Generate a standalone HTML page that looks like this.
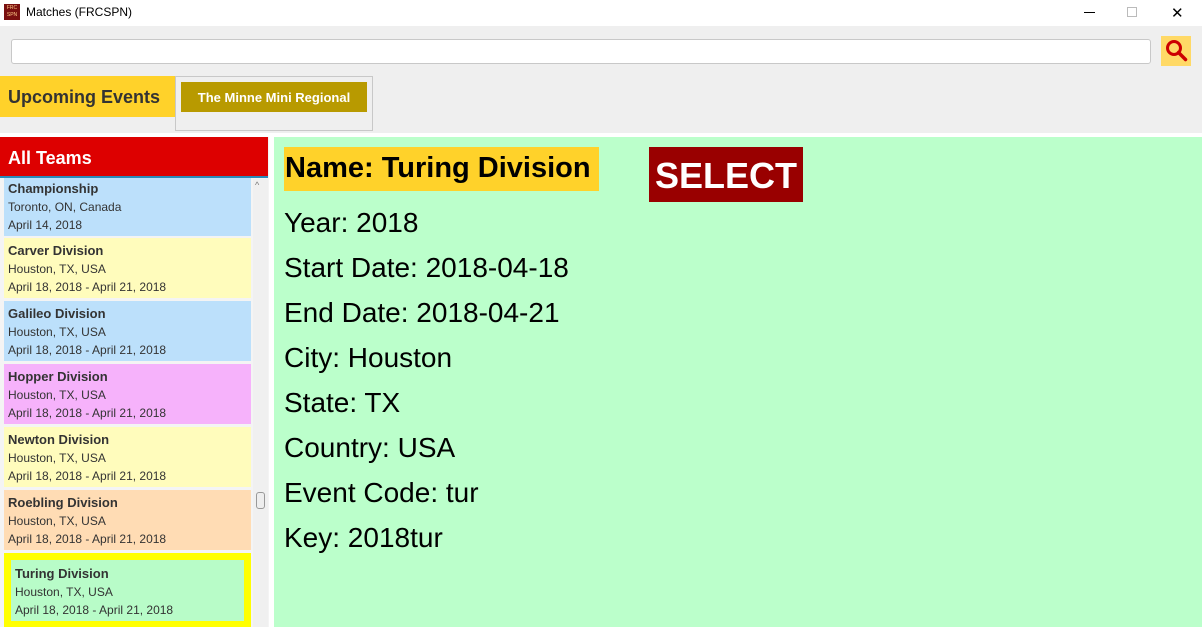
<!DOCTYPE html>
<html><head><style>
*{margin:0;padding:0;box-sizing:border-box}
body{width:1202px;height:627px;overflow:hidden;background:#fff;font-family:"Liberation Sans",sans-serif;position:relative}
.a{position:absolute}
.it{position:absolute;left:4px;width:247px;height:60px;padding:3px 0 0 4px;color:#333;font-size:12px;line-height:18px;font-family:"Liberation Sans",sans-serif}
.it b{font-size:13px;display:block;line-height:19px}
.d{position:absolute;left:284px;font-size:28px;color:#000;font-family:"Liberation Sans",sans-serif}
</style></head><body>
<div class="a" style="left:0;top:0;width:1202px;height:26px;background:#fff"></div>
<div class="a" style="left:4px;top:4px;width:16px;height:16px;background:#7a1010;color:#fc8;font-size:5px;line-height:7px;text-align:center;padding-top:1px">FRC<br>SPN</div>
<div class="a" style="left:26px;top:5px;font-size:12px;color:#000">Matches (FRCSPN)</div>
<div class="a" style="left:1084px;top:12px;width:11px;height:1px;background:#000"></div>
<div class="a" style="left:1127px;top:7px;width:10px;height:10px;border:1px solid #bbb"></div>
<div class="a" style="left:1171px;top:4px;font-size:15px;color:#000">✕</div>
<div class="a" style="left:0;top:26px;width:1202px;height:107px;background:#efefef"></div>
<div class="a" style="left:11px;top:39px;width:1140px;height:25px;background:#fff;border:1px solid #c8c8c8;border-radius:3px"></div>
<div class="a" style="left:1161px;top:36px;width:30px;height:30px;background:#ffd966">
<svg width="30" height="30"><circle cx="13" cy="12" r="6.5" fill="none" stroke="#c00" stroke-width="3"/><line x1="17.5" y1="16.5" x2="24.5" y2="23.5" stroke="#c00" stroke-width="3.5" stroke-linecap="round"/></svg></div>
<div class="a" style="left:0;top:76px;width:175px;height:41px;background:#ffd22a;font-weight:bold;font-size:18px;color:#333;padding:11px 0 0 8px">Upcoming Events</div>
<div class="a" style="left:175px;top:76px;width:198px;height:55px;border:1px solid #c8c8c8"></div>
<div class="a" style="left:181px;top:82px;width:186px;height:30px;background:#b89a00;color:#fff;font-weight:bold;font-size:13px;padding-top:8px;text-align:center">The Minne Mini Regional</div>
<div class="a" style="left:0;top:137px;width:269px;height:490px;background:#f4f4f4"></div>
<div class="a" style="left:0;top:137px;width:268px;height:41px;background:#dd0000;color:#fff;font-weight:bold;font-size:18px;padding:11px 0 0 8px;border-bottom:2px solid #2a8ab8">All Teams</div>
<div class="a" style="left:253px;top:179px;width:15px;height:448px;background:#f0f0f0"></div>
<div class="a" style="left:256px;top:492px;width:9px;height:17px;border:1px solid #999;border-radius:3px;background:#eee"></div>
<div class="a" style="left:255px;top:180px;font-size:9px;color:#777">^</div>
<div class="it" style="top:178px;height:58px;background:#bce0fb;padding-top:1px"><b>Championship</b>Toronto, ON, Canada<br>April 14, 2018</div>
<div class="it" style="top:238px;background:#fffcbc"><b>Carver Division</b>Houston, TX, USA<br>April 18, 2018 - April 21, 2018</div>
<div class="it" style="top:301px;background:#bce0fb"><b>Galileo Division</b>Houston, TX, USA<br>April 18, 2018 - April 21, 2018</div>
<div class="it" style="top:364px;background:#f6b2fb"><b>Hopper Division</b>Houston, TX, USA<br>April 18, 2018 - April 21, 2018</div>
<div class="it" style="top:427px;background:#fffcbc"><b>Newton Division</b>Houston, TX, USA<br>April 18, 2018 - April 21, 2018</div>
<div class="it" style="top:490px;background:#ffdcb4"><b>Roebling Division</b>Houston, TX, USA<br>April 18, 2018 - April 21, 2018</div>
<div class="a" style="left:4px;top:553px;width:247px;height:74px;background:#ffff00"></div>
<div class="it" style="left:11px;top:560px;width:233px;height:61px;background:#b8fcc8;padding-top:4px"><b>Turing Division</b>Houston, TX, USA<br>April 18, 2018 - April 21, 2018</div>
<div class="a" style="left:274px;top:137px;width:928px;height:490px;background:#bbffcb"></div>
<div class="a" style="left:284px;top:147px;width:315px;height:44px;background:#ffd22a;font-weight:bold;font-size:29px;padding:5px 0 0 1px;white-space:nowrap">Name: Turing Division</div>
<div class="a" style="left:649px;top:147px;width:154px;height:55px;background:#990000;color:#fff;font-weight:bold;font-size:36px;text-align:center;padding-top:8px">SELECT</div>
<div class="d" style="top:207px">Year: 2018</div>
<div class="d" style="top:252px">Start Date: 2018-04-18</div>
<div class="d" style="top:297px">End Date: 2018-04-21</div>
<div class="d" style="top:342px">City: Houston</div>
<div class="d" style="top:387px">State: TX</div>
<div class="d" style="top:432px">Country: USA</div>
<div class="d" style="top:477px">Event Code: tur</div>
<div class="d" style="top:522px">Key: 2018tur</div>
</body></html>
